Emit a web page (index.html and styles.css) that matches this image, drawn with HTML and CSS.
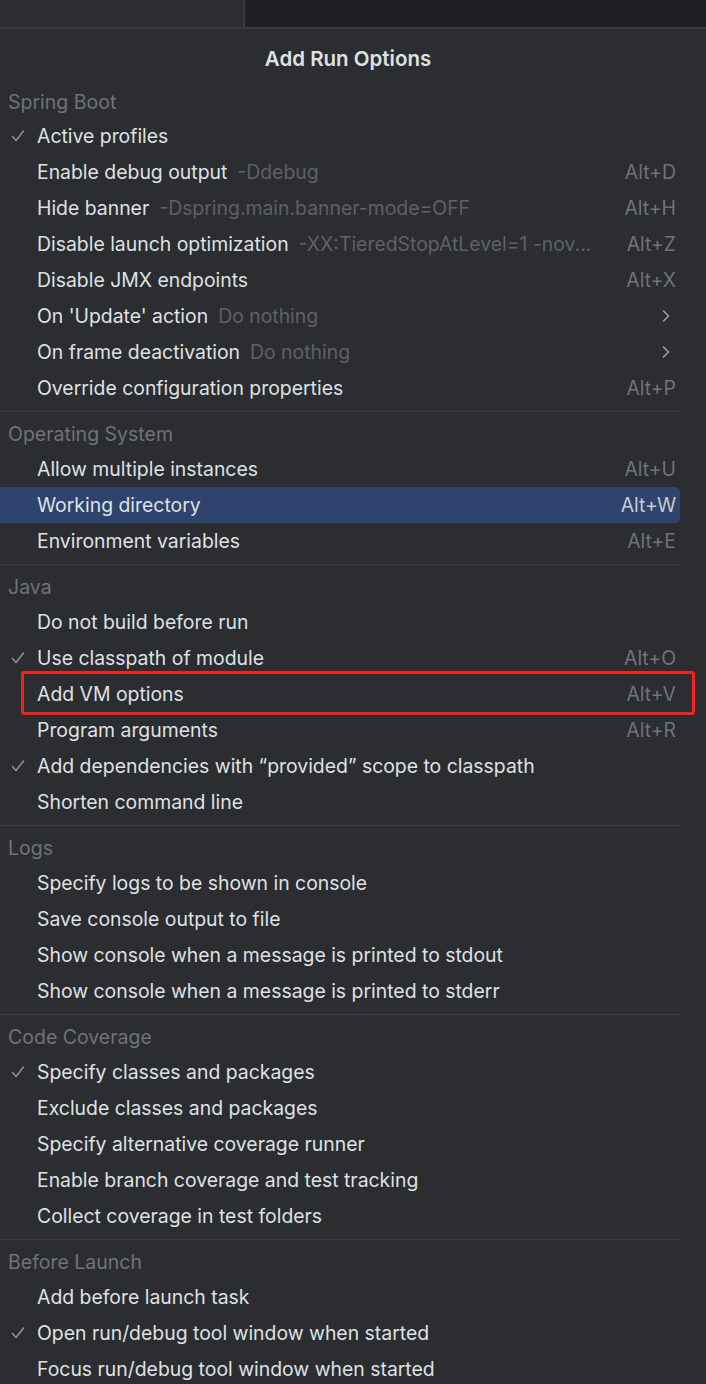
FILE: index.html
```html
<!DOCTYPE html>
<html>
<head>
<meta charset="utf-8">
<link rel="stylesheet" href="styles.css">
</head>
<body>
<div class="topbar">
  <div class="top-left"></div>
  <div class="top-divider"></div>
  <div class="top-right"></div>
</div>
<div class="popup">
  <div class="title">Add Run Options</div>

  <div class="section first">
    <div class="header">Spring Boot</div>
    <div class="row"><span class="check"><svg viewBox="0 0 14 14" width="14" height="14"><polyline points="1.5,7.5 5,11.5 12.5,2"/></svg></span><span class="label">Active profiles</span></div>
    <div class="row"><span class="label">Enable debug output</span><span class="hint">-Ddebug</span><span class="key">Alt+D</span></div>
    <div class="row"><span class="label">Hide banner</span><span class="hint">-Dspring.main.banner-mode=OFF</span><span class="key">Alt+H</span></div>
    <div class="row"><span class="label">Disable launch optimization</span><span class="hint">-XX:TieredStopAtLevel=1 -nov...</span><span class="key">Alt+Z</span></div>
    <div class="row"><span class="label">Disable JMX endpoints</span><span class="key">Alt+X</span></div>
    <div class="row"><span class="label">On 'Update' action</span><span class="hint">Do nothing</span><span class="arrow"><svg viewBox="0 0 8 12" width="8" height="12"><polyline points="1.5,1 6.5,6 1.5,11"/></svg></span></div>
    <div class="row"><span class="label">On frame deactivation</span><span class="hint">Do nothing</span><span class="arrow"><svg viewBox="0 0 8 12" width="8" height="12"><polyline points="1.5,1 6.5,6 1.5,11"/></svg></span></div>
    <div class="row"><span class="label">Override configuration properties</span><span class="key">Alt+P</span></div>
  </div>

  <div class="section">
    <div class="sep"></div>
    <div class="header">Operating System</div>
    <div class="row"><span class="label">Allow multiple instances</span><span class="key">Alt+U</span></div>
    <div class="row selected"><span class="label">Working directory</span><span class="key">Alt+W</span></div>
    <div class="row"><span class="label">Environment variables</span><span class="key">Alt+E</span></div>
  </div>

  <div class="section">
    <div class="sep"></div>
    <div class="header">Java</div>
    <div class="row"><span class="label">Do not build before run</span></div>
    <div class="row"><span class="check"><svg viewBox="0 0 14 14" width="14" height="14"><polyline points="1.5,7.5 5,11.5 12.5,2"/></svg></span><span class="label">Use classpath of module</span><span class="key">Alt+O</span></div>
    <div class="row marked"><span class="label">Add VM options</span><span class="key">Alt+V</span><span class="redbox"></span></div>
    <div class="row"><span class="label">Program arguments</span><span class="key">Alt+R</span></div>
    <div class="row"><span class="check"><svg viewBox="0 0 14 14" width="14" height="14"><polyline points="1.5,7.5 5,11.5 12.5,2"/></svg></span><span class="label">Add dependencies with “provided” scope to classpath</span></div>
    <div class="row"><span class="label">Shorten command line</span></div>
  </div>

  <div class="section">
    <div class="sep"></div>
    <div class="header">Logs</div>
    <div class="row"><span class="label">Specify logs to be shown in console</span></div>
    <div class="row"><span class="label">Save console output to file</span></div>
    <div class="row"><span class="label">Show console when a message is printed to stdout</span></div>
    <div class="row"><span class="label">Show console when a message is printed to stderr</span></div>
  </div>

  <div class="section">
    <div class="sep"></div>
    <div class="header">Code Coverage</div>
    <div class="row"><span class="check"><svg viewBox="0 0 14 14" width="14" height="14"><polyline points="1.5,7.5 5,11.5 12.5,2"/></svg></span><span class="label">Specify classes and packages</span></div>
    <div class="row"><span class="label">Exclude classes and packages</span></div>
    <div class="row"><span class="label">Specify alternative coverage runner</span></div>
    <div class="row"><span class="label">Enable branch coverage and test tracking</span></div>
    <div class="row"><span class="label">Collect coverage in test folders</span></div>
  </div>

  <div class="section">
    <div class="sep"></div>
    <div class="header">Before Launch</div>
    <div class="row"><span class="label">Add before launch task</span></div>
    <div class="row"><span class="check"><svg viewBox="0 0 14 14" width="14" height="14"><polyline points="1.5,7.5 5,11.5 12.5,2"/></svg></span><span class="label">Open run/debug tool window when started</span></div>
    <div class="row"><span class="label">Focus run/debug tool window when started</span></div>
  </div>
</div>
</body>
</html>
```
FILE: styles.css
```css
* { box-sizing: border-box; }
html, body {
  margin: 0;
  padding: 0;
  background: #2b2d30;
  height: 1384px;
  overflow: hidden;
}
body {
  font-family: Inter, "Noto Sans", sans-serif;
  color: #dfe1e5;
  font-size: 19.4px;
}
.topbar {
  display: flex;
  height: 29px;
  border-bottom: 2px solid #393b40;
}
.top-left { width: 243px; background: #2b2d30; }
.top-divider { width: 2px; background: #393b40; }
.top-right { flex: 1; background: #1e1f22; }

.popup {
  width: 706px;
}
.title {
  height: 58px;
  padding-top: 1px;
  line-height: 57px;
  text-align: center;
  padding-right: 10px;
  font-weight: 600;
  font-size: 20.5px;
  color: #dfe1e5;
}
.section { width: 680px; }
.section.first .header {
  height: 31px;
  line-height: 31px;
  padding-top: 0;
}
.sep {
  height: 1px;
  background: #393b40;
  margin-top: 5px;
}
.header {
  height: 39px;
  padding-top: 6px;
  line-height: 33px;
  padding-left: 8px;
  color: #6f737a;
  font-size: 19.5px;
}
.row {
  position: relative;
  display: flex;
  align-items: center;
  height: 36px;
  padding-left: 37px;
  padding-right: 4px;
  white-space: nowrap;
}
.row.selected {
  background: #2e436e;
  border-radius: 0 5px 5px 0;
}
.check {
  position: absolute;
  left: 11px;
  top: 11px;
  width: 14px;
  height: 14px;
}
.check svg, .arrow svg { display: block; }
.check polyline {
  fill: none;
  stroke: #8c8f94;
  stroke-width: 1.6;
  stroke-linecap: round;
  stroke-linejoin: round;
}
.label { color: #dfe1e5; }
.hint {
  margin-left: 10px;
  color: #5e6167;
  flex: 0 1 auto;
  overflow: hidden;
}
.key {
  margin-left: auto;
  color: #6f737a;
}
.selected .key { color: #c9ccd1; }
.arrow {
  margin-left: auto;
  margin-right: 6px;
  width: 8px;
  height: 12px;
}
.arrow polyline {
  fill: none;
  stroke: #a0a3a8;
  stroke-width: 1.5;
  stroke-linecap: round;
  stroke-linejoin: round;
}
.redbox {
  position: absolute;
  left: 21px;
  top: -5px;
  width: 674px;
  height: 44px;
  border: 3px solid #f2231b;
  border-radius: 3px;
  pointer-events: none;
}
```
